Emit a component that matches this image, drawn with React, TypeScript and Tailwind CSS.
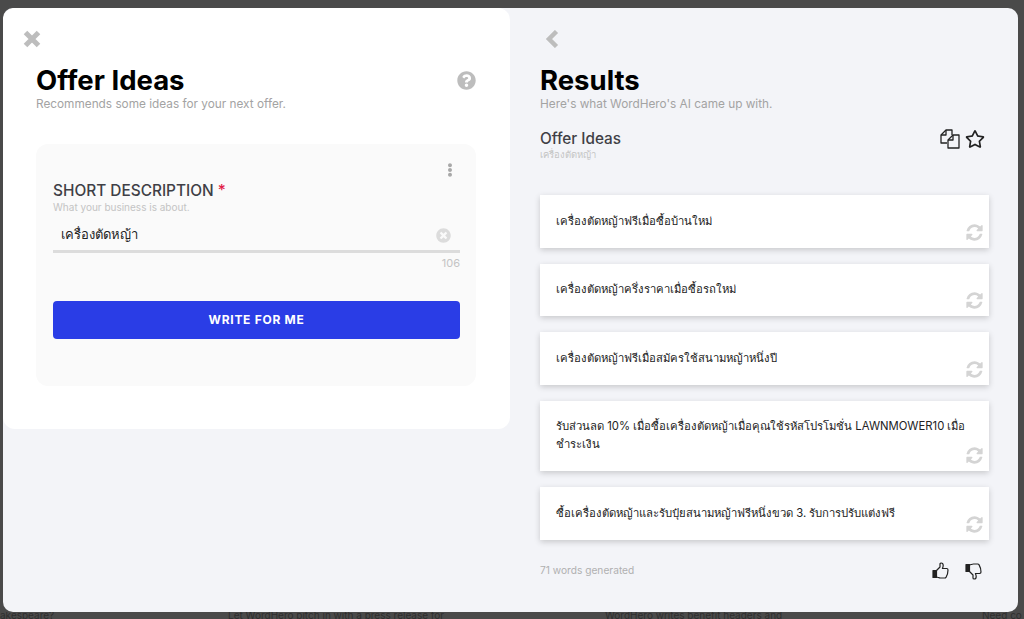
import { FaQuestionCircle, FaEllipsisV, FaTimesCircle, FaRegStar } from 'react-icons/fa'

const FONT = "font-['Inter','Noto_Sans','DejaVu_Sans',sans-serif]"

const RESULTS = [
  'เครื่องตัดหญ้าฟรีเมื่อซื้อบ้านใหม่',
  'เครื่องตัดหญ้าครึ่งราคาเมื่อซื้อรถใหม่',
  'เครื่องตัดหญ้าฟรีเมื่อสมัครใช้สนามหญ้าหนึ่งปี',
  'รับส่วนลด 10% เมื่อซื้อเครื่องตัดหญ้าเมื่อคุณใช้รหัสโปรโมชั่น LAWNMOWER10 เมื่อชำระเงิน',
  'ซื้อเครื่องตัดหญ้าและรับปุ๋ยสนามหญ้าฟรีหนึ่งขวด 3. รับการปรับแต่งฟรี',
]

function CloseIcon() {
  return (
    <svg width="18" height="18" viewBox="0 0 18 18" fill="none" stroke="#bdbdbd" strokeWidth="5" className="-ml-[13px]">
      <path d="M2.500 2.500l13 13M15.500 2.500l-13 13" />
    </svg>
  )
}

function BackIcon() {
  return (
    <svg width="15" height="18" viewBox="0 0 15 18" fill="none" stroke="#bdbdbd" strokeWidth="4.500" className="ml-[4px]">
      <path d="M12.500 1.500 5 9l7.500 7.500" />
    </svg>
  )
}

function RefreshIcon() {
  return (
    <svg width="19" height="19" viewBox="0 0 1792 1792" fill="#d4d4d4" className="absolute bottom-[6px] right-[5px]">
      <path d="M1639 1056q0 5-1 7-64 268-268 434.500t-478 166.500q-146 0-282.500-55t-243.500-157l-129 129q-19 19-45 19t-45-19-19-45v-448q0-26 19-45t45-19h448q26 0 45 19t19 45-19 45l-137 137q71 66 161 102t187 36q134 0 250-65t186-179q11-17 53-117 8-23 30-23h192q13 0 22.500 9.500t9.500 22.500zm25-800v448q0 26-19 45t-45 19h-448q-26 0-45-19t-19-45 19-45l138-138q-148-137-349-137-134 0-250 65t-186 179q-11 17-53 117-8 23-30 23h-199q-13 0-22.500-9.500t-9.500-22.500v-7q65-268 270-434.500t480-166.500q146 0 284 55.500t245 156.500l130-129q19-19 45-19t45 19 19 45z" />
    </svg>
  )
}

function FilesIcon() {
  return (
    <svg width="20" height="20" viewBox="0 0 20 20" fill="none" stroke="#222" strokeWidth="1.300" strokeLinejoin="round">
      <path d="M7 14H1V6l5-5h6v5" />
      <path d="M6 1v5H1" />
      <path d="M13 6h6v13H8v-8z" fill="#f3f4f8" />
      <path d="M13 6v5H8" />
    </svg>
  )
}

function ThumbUp() {
  return (
    <svg width="17" height="18" viewBox="0 0 17 18" fill="none" stroke="#222" strokeWidth="1.200" strokeLinejoin="round">
      <path d="M1 8.500h3.500v7H1z" fill="#222" />
      <path d="M4.500 8.500 8 5V2c0-.8.6-1 1.200-1 1.300 0 2 1.200 2 2.600 0 1-.4 2-.8 2.900h4.200c.8 0 1.400.6 1.400 1.400 0 3-1 5.600-1.900 7.200-.3.500-.8.900-1.400.900H8.500c-1.500 0-2.500-.8-4-1" />
    </svg>
  )
}

function ThumbDown() {
  return (
    <svg width="17" height="18" viewBox="0 0 17 18" fill="none" stroke="#222" strokeWidth="1.200" strokeLinejoin="round">
      <path d="M1 2.500h3.500v7H1z" fill="#222" />
      <path d="M4.500 9.500 8 13v3c0 .8.6 1 1.200 1 1.300 0 2-1.200 2-2.600 0-1-.4-2-.8-2.900h4.200c.8 0 1.400-.6 1.400-1.400 0-3-1-5.600-1.900-7.200-.3-.5-.8-.9-1.400-.9H8.500c-1.500 0-2.500.8-4 1" />
    </svg>
  )
}

function ResultCard({ text }: { text: string }) {
  return (
    <div className="relative bg-white pb-[18px] pl-4 pr-5 pt-[16.500px] text-[11.300px] leading-[18px] text-[#222] shadow-[0_2px_6px_rgba(0,0,0,0.18)]">
      {text}
      <RefreshIcon />
    </div>
  )
}

export default function App() {
  return (
    <div className={`${FONT} flex h-[619px] w-[1024px] flex-col overflow-hidden bg-[#4a4a4a]`}>
      <div className="ml-[3px] mt-2 flex h-[604px] w-[1015px] shrink-0 items-start overflow-hidden rounded-[10px] bg-[#f3f4f8]">
        <section className="h-[421px] w-[507px] shrink-0 rounded-xl bg-white pl-[33px] pr-[34px] pt-[22px]">
          <CloseIcon />
          <div className="mt-4 flex items-center justify-between">
            <h1 className="text-[27.500px] font-bold leading-8 text-black">Offer Ideas</h1>
            <FaQuestionCircle size={19} className="text-[#bdbdbd]" />
          </div>
          <p className="text-[11.800px] leading-4 text-[#a3a3a3]">Recommends some ideas for your next offer.</p>
          <div className="mt-8 h-[242px] rounded-xl bg-[#fafafa] pl-[17px] pr-4">
            <div className="flex justify-end pr-[3px] pt-[19px]">
              <FaEllipsisV size={14} className="text-[#a8a8a8]" />
            </div>
            <div className="mt-1 text-[15.400px] font-medium leading-5 text-[#3f3f46]">
              SHORT DESCRIPTION <span className="text-[#e11d48]">*</span>
            </div>
            <div className="text-[10px] leading-3 text-[#c4c4c4]">What your business is about.</div>
            <div className="mt-[9px] flex h-[31px] items-center justify-between border-b-[3px] border-[#dcdcdc] pb-[2px] pl-2 pr-[9px]">
              <span className="text-[13px] text-[#222]">เครื่องตัดหญ้า</span>
              <FaTimesCircle size={15} className="text-[#dcdcdc]" />
            </div>
            <div className="text-right text-[11px] leading-5 text-[#c4c4c4]">106</div>
            <button
              type="button"
              className="mt-[28px] h-[38px] w-full rounded bg-[#2a3de6] text-xs font-bold tracking-[0.06em] text-white"
            >
              WRITE FOR ME
            </button>
          </div>
        </section>
        <section className="flex-1 pl-[30px] pr-[29px] pt-[22px]">
          <BackIcon />
          <h1 className="mt-4 text-[27.500px] font-bold leading-8 text-black">Results</h1>
          <p className="text-[11.800px] leading-4 text-[#a3a3a3]">Here's what WordHero's AI came up with.</p>
          <div className="mt-[17px] flex items-start justify-between">
            <div>
              <div className="text-[15.300px] font-medium leading-5 text-[#3f3f46]">Offer Ideas</div>
              <div className="text-[9.500px] leading-3 text-[#c4c4c4]">เครื่องตัดหญ้า</div>
            </div>
            <div className="flex items-center gap-[5px] pr-[4px]">
              <FilesIcon />
              <FaRegStar size={20} className="text-[#222]" />
            </div>
          </div>
          <div className="mt-[34px] flex flex-col gap-4">
            {RESULTS.map((text) => (
              <ResultCard key={text} text={text} />
            ))}
          </div>
          <div className="mt-[22px] flex items-center justify-between pr-[7px]">
            <span className="text-[10.200px] text-[#b0b0b0]">71 words generated</span>
            <div className="flex items-center gap-4">
              <ThumbUp />
              <ThumbDown />
            </div>
          </div>
        </section>
      </div>
      <div className="flex h-[7px] overflow-hidden text-[10px] leading-[7px] text-[#2e2e2e]">
        <span className="w-[228px] shrink-0">akespeare?</span>
        <span className="w-[377px] shrink-0">Let WordHero pitch in with a press release for</span>
        <span className="w-[377px] shrink-0">WordHero writes benefit headers and</span>
        <span>Need co</span>
      </div>
    </div>
  )
}
